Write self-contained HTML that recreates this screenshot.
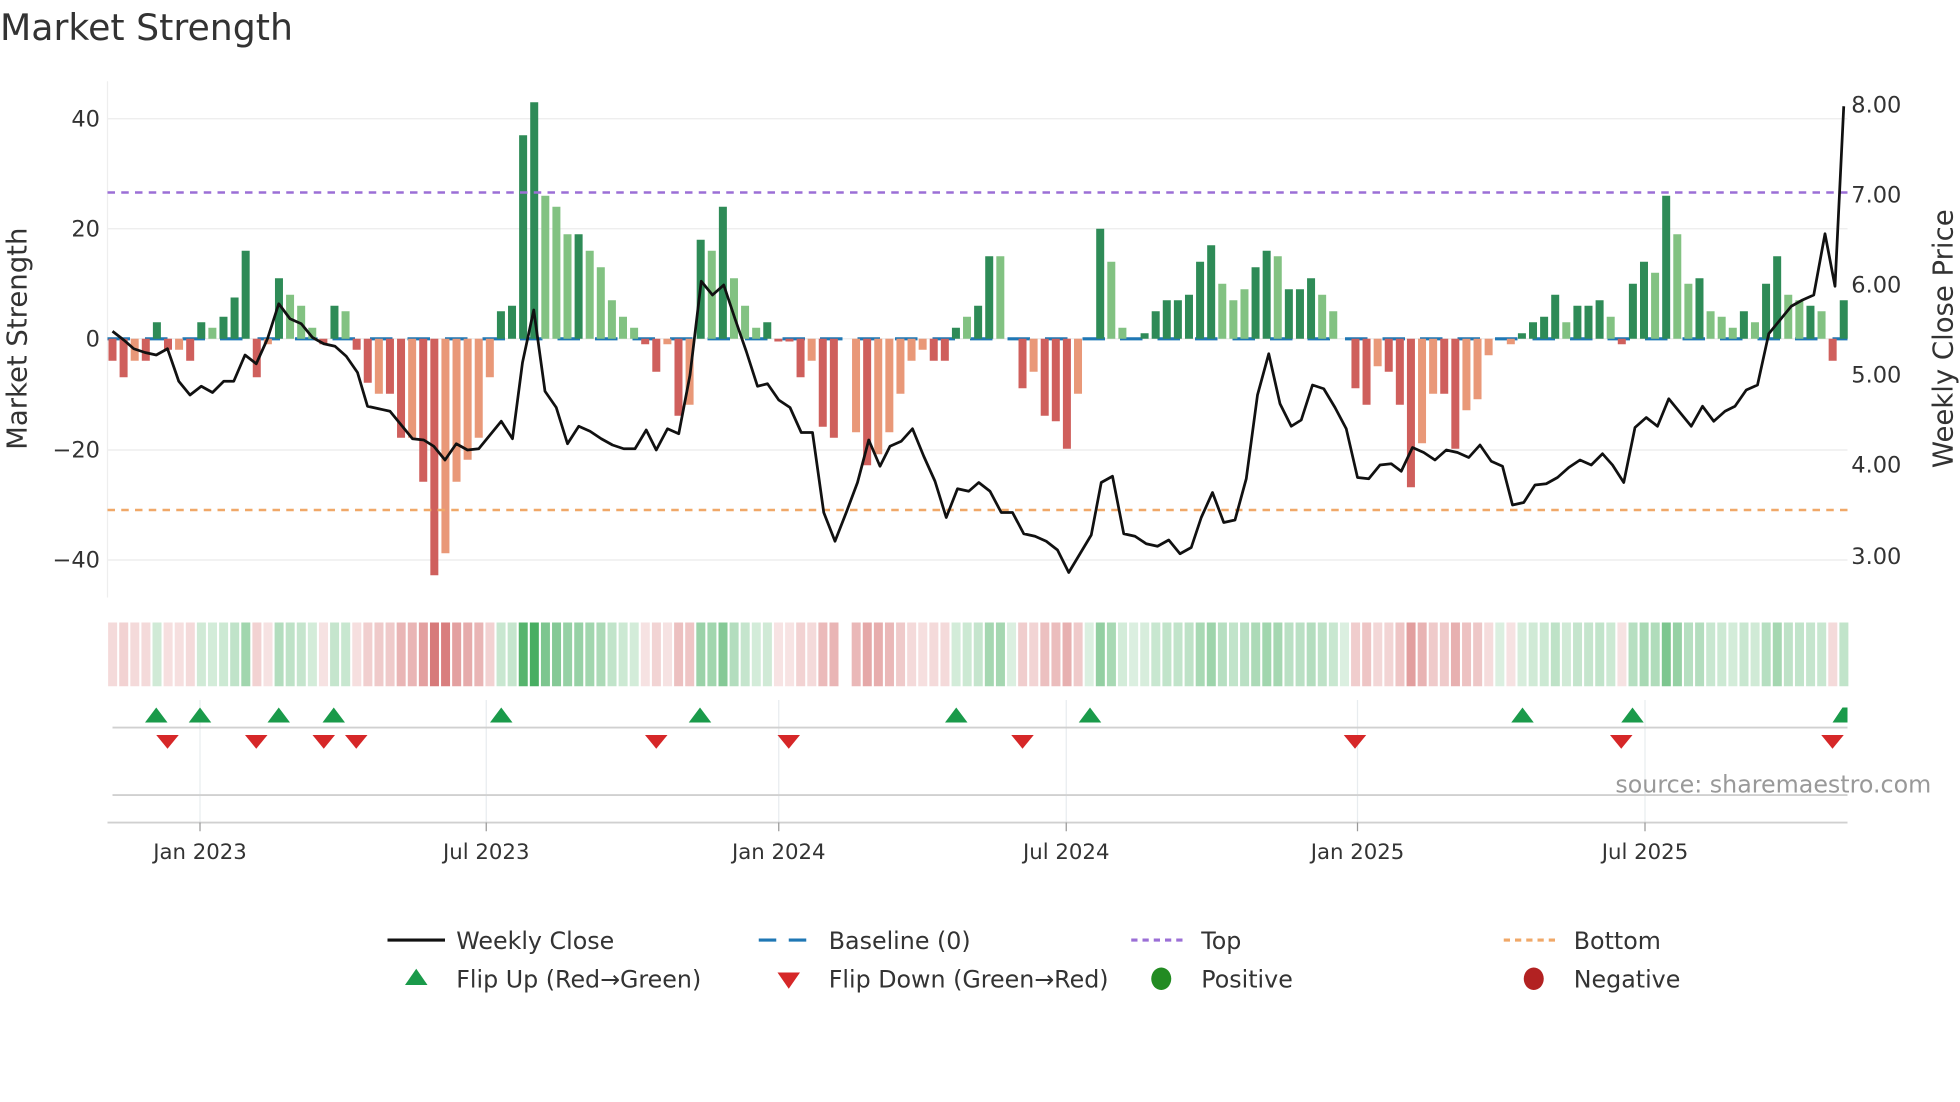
<!DOCTYPE html>
<html><head><meta charset="utf-8"><style>
html,body{margin:0;padding:0;background:#fff;}
svg{display:block;font-family:"DejaVu Sans","Liberation Sans",sans-serif;}
</style></head><body>
<svg id="s" width="1960" height="1102" viewBox="0 0 1568 881.6" xmlns="http://www.w3.org/2000/svg">
<rect width="1568" height="882" fill="#fff"/>
<text x="0" y="32" font-size="29" fill="#333">Market Strength</text>
<g stroke="#ebebeb" stroke-width="1">
<line x1="86" x2="1478" y1="95" y2="95"/><line x1="86" x2="1478" y1="183" y2="183"/>
<line x1="86" x2="1478" y1="271" y2="271"/><line x1="86" x2="1478" y1="360" y2="360"/>
<line x1="86" x2="1478" y1="448" y2="448"/>
</g>
<line x1="86" x2="86" y1="65" y2="478" stroke="#eee"/>
<g font-size="18" fill="#333" text-anchor="end">
<text x="80" y="101">40</text><text x="80" y="189">20</text><text x="80" y="277">0</text>
<text x="80" y="366">−20</text><text x="80" y="454">−40</text>
</g>
<g font-size="18" fill="#333">
<text x="1481" y="90">8.00</text><text x="1481" y="162">7.00</text><text x="1481" y="234">6.00</text>
<text x="1481" y="306">5.00</text><text x="1481" y="378">4.00</text><text x="1481" y="451">3.00</text>
</g>
<text transform="translate(21,271) rotate(-90)" font-size="22" fill="#333" text-anchor="middle">Market Strength</text>
<text transform="translate(1562,271) rotate(-90)" font-size="22" fill="#333" text-anchor="middle">Weekly Close Price</text>
<line x1="86" x2="1478" y1="271" y2="271" stroke="#1f77b4" stroke-width="2.5" stroke-dasharray="18 12"/>
<g id="bars"></g>
<line x1="86" x2="1478" y1="154" y2="154" stroke="#9b6fd6" stroke-width="2" stroke-dasharray="6 5"/>
<line x1="86" x2="1478" y1="408" y2="408" stroke="#f0a868" stroke-width="2" stroke-dasharray="6 5"/>
<polyline id="pl" fill="none" stroke="#111" stroke-width="2.2" stroke-linejoin="round"/>
<g id="heat"></g>
<g stroke="#e8ecef" stroke-width="1">
<line x1="160" x2="160" y1="560" y2="658"/><line x1="389" x2="389" y1="560" y2="658"/>
<line x1="623" x2="623" y1="560" y2="658"/><line x1="853" x2="853" y1="560" y2="658"/>
<line x1="1086" x2="1086" y1="560" y2="658"/><line x1="1316" x2="1316" y1="560" y2="658"/>
</g>
<line x1="90" x2="1478" y1="582" y2="582" stroke="#d0d0d0" stroke-width="1.5"/>
<line x1="90" x2="1478" y1="636" y2="636" stroke="#d0d0d0" stroke-width="1.5"/>
<line x1="86" x2="1478" y1="658" y2="658" stroke="#d0d0d0" stroke-width="1.5"/>
<g id="flips"></g>
<g stroke="#999" stroke-width="1">
<line x1="160" x2="160" y1="658" y2="665"/><line x1="389" x2="389" y1="658" y2="665"/>
<line x1="623" x2="623" y1="658" y2="665"/><line x1="853" x2="853" y1="658" y2="665"/>
<line x1="1086" x2="1086" y1="658" y2="665"/><line x1="1316" x2="1316" y1="658" y2="665"/>
</g>
<g font-size="17" fill="#333" text-anchor="middle">
<text x="160" y="687">Jan 2023</text><text x="389" y="687">Jul 2023</text><text x="623" y="687">Jan 2024</text>
<text x="853" y="687">Jul 2024</text><text x="1086" y="687">Jan 2025</text><text x="1316" y="687">Jul 2025</text>
</g>
<text x="1545" y="634" font-size="19" fill="#999" text-anchor="end">source: sharemaestro.com</text>
<g font-size="19" fill="#333">
<line x1="310" x2="356" y1="752" y2="752" stroke="#111" stroke-width="2.5"/><text x="365" y="759">Weekly Close</text>
<line x1="607" x2="652" y1="752" y2="752" stroke="#1f77b4" stroke-width="2.5" stroke-dasharray="14 10"/><text x="663" y="759">Baseline (0)</text>
<line x1="905" x2="950" y1="752" y2="752" stroke="#9b6fd6" stroke-width="2.5" stroke-dasharray="5 4"/><text x="961" y="759">Top</text>
<line x1="1203" x2="1248" y1="752" y2="752" stroke="#f0a868" stroke-width="2.5" stroke-dasharray="5 4"/><text x="1259" y="759">Bottom</text>
<polygon points="324,788 342,788 333,775" fill="#1a9a4a"/><text x="365" y="790">Flip Up (Red→Green)</text>
<polygon points="622,778 640,778 631,791" fill="#d62728"/><text x="663" y="790">Flip Down (Green→Red)</text>
<ellipse cx="929" cy="783" rx="8" ry="9" fill="#228b22"/><text x="961" y="790">Positive</text>
<ellipse cx="1227" cy="783" rx="8" ry="9" fill="#b22222"/><text x="1259" y="790">Negative</text>
</g>
</svg>
<script>
var v=[[-4,0],[-7,0],[-4,1],[-4,0],[3,0],[-2,0],[-2,1],[-4,0],[3,0],[2,1],[4,0],[7.5,0],[16,0],[-7,0],[-1,1],[11,0],[8,1],[6,1],[2,1],[-1,0],[6,0],[5,1],[-2,0],[-8,0],[-10,1],[-10,0],[-18,0],[-18,1],[-26,0],[-43,0],[-39,1],[-26,1],[-22,1],[-18,1],[-7,1],[5,0],[6,0],[37,0],[43,0],[26,1],[24,1],[19,1],[19,0],[16,1],[13,1],[7,1],[4,1],[2,1],[-1,0],[-6,0],[-1,1],[-14,0],[-12,1],[18,0],[16,1],[24,0],[11,1],[6,1],[2,1],[3,0],[-0.5,0],[-0.5,0],[-7,0],[-4,1],[-16,0],[-18,0],[0,0],[-17,1],[-23,0],[-21,1],[-17,1],[-10,1],[-4,1],[-2,1],[-4,0],[-4,0],[2,0],[4,1],[6,0],[15,0],[15,1],[0,0],[-9,0],[-6,1],[-14,0],[-15,0],[-20,0],[-10,1],[0,0],[20,0],[14,1],[2,1],[0,0],[1,0],[5,0],[7,0],[7,0],[8,0],[14,0],[17,0],[10,1],[7,1],[9,1],[13,0],[16,0],[15,1],[9,0],[9,0],[11,0],[8,1],[5,1],[0,0],[-9,0],[-12,0],[-5,1],[-6,0],[-12,0],[-27,0],[-19,1],[-10,1],[-10,0],[-20,0],[-13,1],[-11,1],[-3,1],[0,0],[-1,1],[1,0],[3,0],[4,0],[8,0],[3,1],[6,0],[6,0],[7,0],[4,1],[-1,0],[10,0],[14,0],[12,1],[26,0],[19,1],[10,1],[11,0],[5,1],[4,1],[2,1],[5,0],[3,1],[10,0],[15,0],[8,1],[7,1],[6,0],[5,1],[-4,0],[7,0]];
var ns="http://www.w3.org/2000/svg",n=v.length,x0=90,dx=(1475-90)/(n-1);
function el(t,a,p){var e=document.createElementNS(ns,t);for(var k in a)e.setAttribute(k,a[k]);p.appendChild(e);return e;}
var B=document.getElementById('bars'),H=document.getElementById('heat');
for(var i=0;i<n;i++){var x=x0+i*dx,val=v[i][0],l=v[i][1];
 var c=val>=0?(l?'#82c282':'#2e8b57'):(l?'#e99878':'#cf5f5c');
 if(val!=0){var h=Math.abs(val)*4.4;el('rect',{x:x-3.2,y:val>0?271-h:271,width:6.4,height:h,fill:c},B);}
 if(x>672&&x<681)continue;
 var a=Math.min(0.85,0.17+Math.abs(val)/60);
 var hc=val>=0?'rgba(40,160,70,'+a+')':'rgba(200,70,70,'+(a*0.85)+')';
 el('rect',{x:x-3.5,y:498,width:7.2,height:51,fill:hc},H);}
var p=[90,265,99,272,107,279,116,282,125,284,134,279,143,305,152,316,161,309,170,314,179,305,187,305,196,284,205,291,214,271,223,243,232,255,241,259,250,270,259,275,268,277,277,285,286,298,294,325,303,327,312,329,321,340,330,351,339,352,347,357,356,368,365,355,374,360,383,359,392,348,401,337,410,351,418,290,427,248,436,313,445,326,454,355,463,341,472,345,481,351,490,356,499,359,508,359,517,344,525,360,534,343,543,347,552,300,561,225,570,236,579,228,588,255,597,281,606,309,614,307,623,320,632,326,641,346,650,346,659,410,668,433,677,410,686,386,695,352,704,373,712,357,721,353,730,343,739,365,748,385,757,414,766,391,775,393,783,386,792,393,801,410,810,410,819,427,828,429,837,433,846,440,855,458,864,443,873,428,881,386,890,381,899,427,908,429,917,435,926,437,935,432,944,443,953,438,961,414,970,394,979,418,988,416,997,383,1006,316,1015,283,1024,323,1033,341,1041,336,1050,308,1059,311,1068,326,1077,343,1086,382,1095,383,1104,372,1113,371,1121,377,1130,358,1139,362,1148,368,1157,360,1166,362,1175,366,1184,356,1193,369,1202,373,1210,404,1219,402,1228,388,1237,387,1246,382,1255,374,1264,368,1273,372,1282,363,1290,372,1299,386,1308,342,1317,334,1326,341,1335,319,1344,330,1353,341,1362,325,1371,337,1380,329,1388,325,1397,312,1406,308,1415,267,1424,256,1433,245,1442,240,1451,236,1460,187,1468,229,1475,85];
var s='';for(var j=0;j<p.length;j+=2)s+=p[j]+','+p[j+1]+' ';document.getElementById('pl').setAttribute('points',s);
var F=document.getElementById('flips');
[125,160,223,267,401,560,765,872,1218,1306].forEach(function(x){el('polygon',{points:(x-9)+',578 '+(x+9)+',578 '+x+',566',fill:'#1a9a4a'},F);});
el('polygon',{points:'1466,578 1478,578 1478,566 1474,566',fill:'#1a9a4a'},F);
[134,205,259,285,525,631,818,1084,1297,1466].forEach(function(x){el('polygon',{points:(x-9)+',588 '+(x+9)+',588 '+x+',599',fill:'#d62728'},F);});
</script>
</body></html>
